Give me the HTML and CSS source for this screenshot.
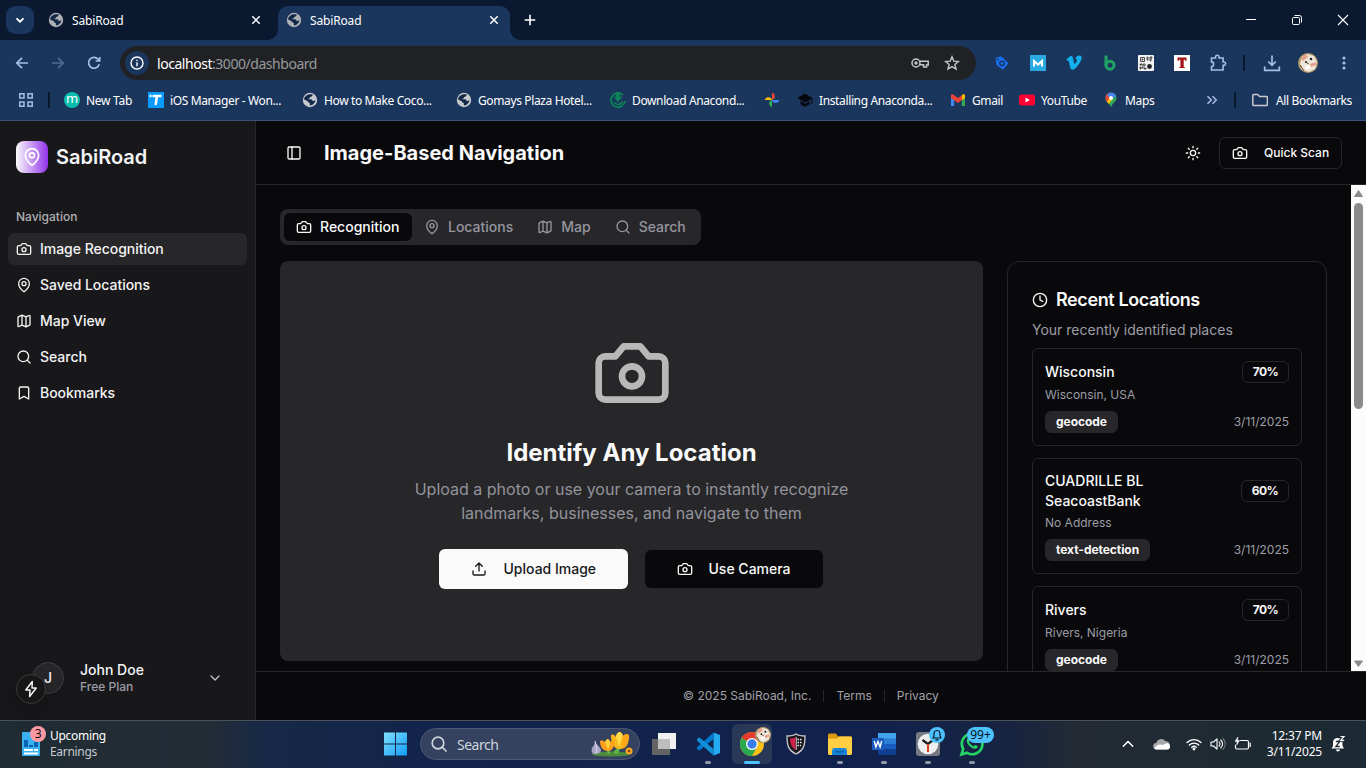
FILE: index.html
```html
<!DOCTYPE html>
<html lang="en">
<head>
<meta charset="utf-8">
<title>SabiRoad</title>
<link rel="stylesheet" href="styles.css">
</head>
<body>
<svg class="defs" width="0" height="0">
  <defs>
    <symbol id="camera" viewBox="0 0 24 24"><path d="M14.5 4h-5L7 7H4a2 2 0 0 0-2 2v9a2 2 0 0 0 2 2h16a2 2 0 0 0 2-2V9a2 2 0 0 0-2-2h-3l-2.5-3z"/><circle cx="12" cy="13" r="3"/></symbol>
    <symbol id="pin" viewBox="0 0 24 24"><path d="M20 10c0 4.993-5.539 10.193-7.399 11.799a1 1 0 0 1-1.202 0C9.539 20.193 4 14.993 4 10a8 8 0 0 1 16 0"/><circle cx="12" cy="10" r="3"/></symbol>
    <symbol id="map" viewBox="0 0 24 24"><path d="M14.106 5.553a2 2 0 0 0 1.788 0l3.659-1.83A1 1 0 0 1 21 4.619v12.764a1 1 0 0 1-.553.894l-4.553 2.277a2 2 0 0 1-1.788 0l-4.212-2.106a2 2 0 0 0-1.788 0l-3.659 1.83A1 1 0 0 1 3 19.381V6.618a1 1 0 0 1 .553-.894l4.553-2.277a2 2 0 0 1 1.788 0zM15 5.764v15M9 3.236v15"/></symbol>
    <symbol id="search" viewBox="0 0 24 24"><circle cx="11" cy="11" r="8"/><path d="m21 21-4.3-4.3"/></symbol>
    <symbol id="bookmark" viewBox="0 0 24 24"><path d="m19 21-7-4-7 4V5a2 2 0 0 1 2-2h10a2 2 0 0 1 2 2v16z"/></symbol>
    <symbol id="chevron" viewBox="0 0 24 24"><path d="m6 9 6 6 6-6"/></symbol>
    <symbol id="globe" viewBox="0 0 16 16"><circle cx="8" cy="8" r="7.2" fill="currentColor" stroke="none"/><path class="globe-land" stroke="none" d="M7.2 2.2h3.1c.5 0 .6.8.1 1.2-.6.5-.6 1.1-1.400 1.300-.8.2-1.100.5-1 1.100.1.5-.5.6-1.200.6-.5 0-.5.8 0 .8h2.200c1.100 0 1.500.8 1.500 1.600 0 .7 1.700.3 2.900-.8-.1 2.700-2.300 4.900-4.600 5.400-.9.1-1.100-.6-.9-1.200.2-.7-.1-1.100-.9-1.400-.7-.300-.8-1.300-1.400-1.600L1.900 7.300c.2-2.100 2.300-4.500 5.300-5.100z"/></symbol>
    <symbol id="face" viewBox="0 0 20 20"><circle cx="10" cy="10" r="10" fill="#b59a6c"/><path d="M4 4l5-3 7 2 3 6-2 7-6 3-7-2-2-6z" fill="#eee6d8"/><path d="M3 5l5-4 2 3-5 4zM12 11l6-2v3l-5 2z" fill="#e5a18e"/><circle cx="8" cy="9" r="1.100" fill="#211c1d"/><circle cx="13" cy="6" r="1.300" fill="#29263a"/><path d="M7 13l4-1 2 3-5 1z" fill="#fff"/><path d="M2 12l4 6M9 10l2 1" stroke="#5b4430" stroke-width="1" fill="none"/></symbol>
  </defs>
</svg>

<header class="browser">
  <div class="tabstrip">
    <div class="tab-menu"><svg class="ln" width="12" height="12" viewBox="0 0 12 12" stroke-width="1.800"><path d="M2.500 4.300 6 7.700l3.500-3.400"/></svg></div>
    <div class="tab tab-idle"><svg class="globe" width="16" height="16"><use href="#globe"/></svg><span>SabiRoad</span><svg class="ln tab-x" width="10" height="10" viewBox="0 0 10 10" stroke-width="1.500"><path d="m1.300 1.300 7.400 7.400m0-7.400-7.400 7.400"/></svg></div>
    <div class="tab tab-active"><svg class="globe" width="16" height="16"><use href="#globe"/></svg><span>SabiRoad</span><svg class="ln tab-x" width="10" height="10" viewBox="0 0 10 10" stroke-width="1.500"><path d="m1.300 1.300 7.400 7.400m0-7.400-7.400 7.400"/></svg></div>
    <svg class="ln new-tab" width="12" height="12" viewBox="0 0 12 12" stroke-width="1.600"><path d="M6 .700v10.600M.700 6h10.600"/></svg>
    <div class="win-controls">
      <svg class="ln" width="12" height="12" viewBox="0 0 12 12" stroke-width="1"><path d="M1 5.500h10"/></svg>
      <svg class="ln" width="12" height="12" viewBox="0 0 12 12" stroke-width="1"><rect x="1.500" y="3.500" width="7" height="7" rx="1"/><path d="M3.500 1.500h5a2 2 0 0 1 2 2v5"/></svg>
      <svg class="ln" width="12" height="12" viewBox="0 0 12 12" stroke-width="1.100"><path d="m1 1 10 10M11 1 1 11"/></svg>
    </div>
  </div>

  <div class="toolbar">
    <svg class="ln nav-ico" width="14" height="14" viewBox="0 0 14 14" stroke-width="1.700"><path d="M13 7H2M7 1.800 1.800 7 7 12.200"/></svg>
    <svg class="ln nav-ico faded" width="14" height="14" viewBox="0 0 14 14" stroke-width="1.700"><path d="M1 7h11M7 1.800 12.200 7 7 12.200"/></svg>
    <svg class="ln nav-ico" width="14" height="14" viewBox="0 0 14 14" stroke-width="1.700"><path d="M12.200 8.200A5.400 5.400 0 1 1 11 3.200l1.500 1.500M12.700 1v4H8.600"/></svg>
    <div class="omnibox">
      <span class="site-info"><svg class="ln" width="14" height="14" viewBox="0 0 14 14" stroke-width="1.400"><circle cx="7" cy="7" r="6"/><path d="M7 6.300v4M7 3.700v1.400"/></svg></span>
      <span class="url"><b>localhost</b>:3000/dashboard</span>
      <svg class="ln key" width="18" height="12" viewBox="0 0 18 12" stroke-width="1.500"><circle cx="5" cy="6" r="4"/><circle cx="5" cy="6" r="1"/><path d="M9 4.300h8.200v3.800h-1.600v2h-3V7.800H9"/></svg>
      <svg class="ln star" width="16" height="16" viewBox="0 0 16 16" stroke-width="1.400"><path d="m8 1.800 1.800 4.300 4.600.4-3.500 3 1.100 4.600-4-2.500-4 2.500 1.100-4.600-3.500-3 4.600-.4z"/></svg>
    </div>
    <div class="extensions">
      <svg width="16" height="16" viewBox="0 0 16 16"><path d="M1.500 3 7 1.300l7.500 7L9 14.500 2.500 10z" fill="#1a6ff0"/><circle cx="8" cy="8.300" r="2.200" fill="none" stroke="#17335d" stroke-width="1.300"/><circle cx="3.800" cy="4.500" r="1" fill="#17335d"/></svg>
      <svg width="16" height="16" viewBox="0 0 16 16"><path fill="#29abe2" d="M0 0h16v16H0z"/><path d="M4 11.500V6l4 3.600L12 6v5.500" fill="none" stroke="#fff" stroke-width="2"/></svg>
      <svg width="16" height="16" viewBox="0 0 16 16"><path fill="#12b0ec" d="M.5 4.300 4 1.300c2-.8 2.800.3 3.200 2.500.5 3 .9 5 1.500 5 .6 0 2.300-2.600 2.300-3.900 0-.9-.8-1.100-1.700-.7C10 1.300 12 .4 13.900.6c2.400.3 2.100 3 .5 6-2 3.700-5 7.700-7.300 8.200-2 .4-2.700-1.600-3.200-3.600-.5-2-.9-5.400-1.500-5.600-.3-.1-1.100.5-1.100.5z"/></svg>
      <svg width="16" height="16" viewBox="0 0 16 16"><path d="M4 .5v10" stroke="#21a366" stroke-width="3"/><circle cx="8" cy="10.200" r="4" fill="none" stroke="#21a366" stroke-width="3"/></svg>
      <svg width="16" height="16" viewBox="0 0 16 16"><rect width="16" height="16" rx="1" fill="#f3f3f3"/><path d="M2.500 2.500h4v4h-4zM4 4h1v1H4zM9 2h1v3H9zM12 2h2v1h-1v3h-1zM2 9h2v1H2zM5 9h2v2H5zM2 12h1v2H2zM4 12h1v1H4zM6 13h2v1H6z" fill="none" stroke="#222" stroke-width=".8"/><circle cx="11.500" cy="11.500" r="2.400" fill="#222"/></svg>
      <svg width="16" height="16" viewBox="0 0 16 16"><path fill="#fff" d="M0 0h16v16H0z"/><path d="M3.500 2.500h9v3.200h-1.300l-.4-.9H9.700v7.300h1.100v1H5.300v-1h1.100V4.800H5.200l-.4.9H3.500z" fill="#a31515"/></svg>
      <svg class="ln pale" width="18" height="18" viewBox="0 0 18 18" stroke-width="1.600"><path d="M2.500 4h4V3a1.800 1.800 0 0 1 3.600 0v1h4v4h.8a1.700 1.700 0 0 1 0 3.400h-.8V16H2.500v-3.500c2.800 0 2.800-4.600 0-4.600z"/></svg>
    </div>
    <i class="bar-sep"></i>
    <svg class="ln pale download" width="18" height="18" viewBox="0 0 18 18" stroke-width="1.700"><path d="M9 1.500V11M5.200 7.500 9 11.300l3.800-3.800M1.700 12.500v3.800h14.600v-3.800"/></svg>
    <svg class="profile" width="20" height="20"><use href="#face"/></svg>
    <svg class="kebab" width="4" height="16" viewBox="0 0 4 16" fill="#a8bde5"><circle cx="2" cy="3" r="1.600"/><circle cx="2" cy="8" r="1.600"/><circle cx="2" cy="13" r="1.600"/></svg>
  </div>

  <div class="bookmarks">
    <svg class="ln pale" width="16" height="16" viewBox="0 0 16 16" stroke-width="1.500"><path d="M1.800 1.800H6V6H1.800zM10 1.800h4.200V6H10zM1.800 10H6v4.200H1.800zM10 10h4.200v4.200H10z"/></svg>
    <i class="bar-sep"></i>
    <div class="bm-list">
      <div class="bm"><span class="m-logo">m</span><span>New Tab</span></div>
      <div class="bm"><svg width="16" height="16" viewBox="0 0 16 16"><path fill="#0a9bff" d="M0 0h16v16H0z"/><path d="M1.500 4h2M4.500 4h9M9 4 7.600 13" fill="none" stroke="#fff" stroke-width="2.500"/></svg><span>iOS Manager - Won...</span></div>
      <div class="bm"><svg class="globe light" width="16" height="16"><use href="#globe"/></svg><span>How to Make Coco...</span></div>
      <div class="bm"><svg class="globe light" width="16" height="16"><use href="#globe"/></svg><span>Gomays Plaza Hotel...</span></div>
      <div class="bm"><svg width="16" height="16" viewBox="0 0 16 16" fill="none" stroke="#0b8457"><path d="M13 3.200A7 7 0 1 0 15 9" stroke-width="1.800"/><path d="M12.500 9.500A4.700 4.700 0 0 1 4 10" stroke-width="1.500"/><path d="M8 0v5" stroke-width="4"/><path d="M3.500 4.500h9L8 10z" fill="#0b8457" stroke="none"/></svg><span>Download Anacond...</span></div>
      <div class="bm"><svg width="16" height="16" viewBox="0 0 16 16"><path d="M8 8V.8a3.700 3.700 0 0 1 0 7.200z" fill="#ea4335"/><path d="M8 8h7.200A3.700 3.700 0 0 1 8 8z" fill="#4285f4"/><path d="M8 8v7.200A3.700 3.700 0 0 1 8 8z" fill="#34a853"/><path d="M8 8H.8A3.700 3.700 0 0 1 8 8z" fill="#fbbc04"/></svg></div>
      <div class="bm"><svg width="16" height="16" viewBox="0 0 16 16" fill="#05080d"><path d="M8 1.500.3 6 8 10.500 14.400 7v5h1V6z"/><path d="M3.500 9 8 11.700 12.500 9v3.200L8 14.700l-4.500-2.500z"/></svg><span>Installing Anaconda...</span></div>
      <div class="bm"><svg width="16" height="16" viewBox="0 0 16 16"><path d="M1 3.500h3.200V14H1z" fill="#4285f4"/><path d="M11.800 3.500H15V14h-3.200z" fill="#34a853"/><path d="M1 3.500V6l7 5 7-5V3.500c0-1.300-1.500-1.500-2.500-.8L8 6 3.500 2.700C2.500 2 1 2.200 1 3.500z" fill="#ea4335"/><path d="m12 3 .8-.5C14 1.700 15 2.400 15 3.700V6l-3.200 2.300z" fill="#fbbc04"/></svg><span>Gmail</span></div>
      <div class="bm"><svg width="16" height="16" viewBox="0 0 16 16"><rect y="2.500" width="16" height="11" rx="2.500" fill="#ff0033"/><path d="m6.500 5.500 4.300 2.500-4.300 2.500z" fill="#fff"/></svg><span>YouTube</span></div>
      <div class="bm"><svg width="16" height="16" viewBox="0 0 16 16"><path d="M8 .5a5.500 5.500 0 0 1 5.500 5.500C13.500 10 9 11 8 15.500 7 11 2.500 10 2.500 6A5.500 5.500 0 0 1 8 .5z" fill="#34a853"/><path d="M2.500 6A5.500 5.500 0 0 1 8 .5L8 6l-3.800 4C3 8.500 2.500 7.500 2.500 6z" fill="#ea4335"/><path d="M4 2.500A5.500 5.500 0 0 1 13.200 4L8 8z" fill="#4285f4"/><path d="m3.800 9.500 4.200-5 2 2-4.200 5.500z" fill="#fbbc04"/><circle cx="8" cy="6" r="2" fill="#fff"/></svg><span>Maps</span></div>
    </div>
    <svg class="ln pale more" width="12" height="12" viewBox="0 0 12 12" stroke-width="1.500"><path d="m1.500 2.200 3.800 3.800-3.800 3.800M6.500 2.200 10.300 6 6.500 9.800"/></svg>
    <i class="bar-sep"></i>
    <div class="bm all"><svg class="ln folder" width="16" height="16" viewBox="0 0 16 16" stroke-width="1.500"><path d="M.8 3.300c0-.6.300-.8.800-.8h4l2 2h7c.5 0 .8.300.8.800v7.400c0 .5-.300.8-.8.8h-13c-.5 0-.8-.300-.8-.8z"/></svg><span>All Bookmarks</span></div>
  </div>
</header>

<div class="app">
  <aside class="sidebar">
    <div class="brand"><span class="brand-mark"><svg class="ln" width="20" height="20"><use href="#pin"/></svg></span><span>SabiRoad</span></div>
    <div class="nav-label">Navigation</div>
    <nav class="nav">
      <a class="nav-item current"><svg class="ln" width="16" height="16"><use href="#camera"/></svg><span>Image Recognition</span></a>
      <a class="nav-item"><svg class="ln" width="16" height="16"><use href="#pin"/></svg><span>Saved Locations</span></a>
      <a class="nav-item"><svg class="ln" width="16" height="16"><use href="#map"/></svg><span>Map View</span></a>
      <a class="nav-item"><svg class="ln" width="16" height="16"><use href="#search"/></svg><span>Search</span></a>
      <a class="nav-item"><svg class="ln" width="16" height="16"><use href="#bookmark"/></svg><span>Bookmarks</span></a>
    </nav>
    <div class="user">
      <span class="avatar">J<span class="dev-badge"><svg class="ln" width="18" height="18" viewBox="0 0 18 18"><path d="M10.300 1.500 3.800 10H8l-.4 6.500L14.200 8H10z"/></svg></span></span>
      <div class="user-text"><div class="user-name">John Doe</div><div class="user-plan">Free Plan</div></div>
      <svg class="ln user-chev" width="16" height="16"><use href="#chevron"/></svg>
    </div>
  </aside>

  <main class="main">
    <div class="topbar">
      <svg class="ln" width="16" height="16" viewBox="0 0 24 24"><rect x="3" y="3" width="18" height="18" rx="2"/><path d="M9 3v18"/></svg>
      <h1>Image-Based Navigation</h1>
      <svg class="ln" width="16" height="16" viewBox="0 0 24 24"><circle cx="12" cy="12" r="4"/><path d="M12 2v2M12 20v2M4.930 4.930l1.410 1.410M17.660 17.660l1.410 1.410M2 12h2M20 12h2M6.340 17.660l-1.410 1.410M19.070 4.930l-1.410 1.410"/></svg>
      <button class="quick"><svg class="ln" width="16" height="16"><use href="#camera"/></svg>Quick Scan</button>
    </div>

    <div class="scroller">
      <div class="content">
        <div class="tabs">
          <span class="pill on"><svg class="ln" width="16" height="16"><use href="#camera"/></svg><span>Recognition</span></span>
          <span class="pill"><svg class="ln" width="16" height="16"><use href="#pin"/></svg><span>Locations</span></span>
          <span class="pill"><svg class="ln" width="16" height="16"><use href="#map"/></svg><span>Map</span></span>
          <span class="pill"><svg class="ln" width="16" height="16"><use href="#search"/></svg><span>Search</span></span>
        </div>
        <div class="columns">
          <section class="hero">
            <svg class="ln hero-icon" width="80" height="80"><use href="#camera"/></svg>
            <h2>Identify Any Location</h2>
            <p>Upload a photo or use your camera to instantly recognize<br>landmarks, businesses, and navigate to them</p>
            <div class="actions">
              <button class="btn-light"><svg class="ln" width="16" height="16" viewBox="0 0 24 24"><path d="M21 15v4a2 2 0 0 1-2 2H5a2 2 0 0 1-2-2v-4M17 8l-5-5-5 5M12 3v12"/></svg><span>Upload Image</span></button>
              <button class="btn-dark"><svg class="ln" width="16" height="16"><use href="#camera"/></svg><span>Use Camera</span></button>
            </div>
          </section>
          <section class="card">
            <h3><svg class="ln" width="16" height="16" viewBox="0 0 24 24"><circle cx="12" cy="12" r="10"/><path d="M12 6v6l4 2"/></svg>Recent Locations</h3>
            <p class="sub">Your recently identified places</p>
            <div class="list">
              <article class="place"><div class="row"><strong>Wisconsin</strong><span class="score">70%</span></div><div class="addr">Wisconsin, USA</div><div class="row foot"><span class="tag">geocode</span><time>3/11/2025</time></div></article>
              <article class="place"><div class="row"><strong>CUADRILLE BL SeacoastBank</strong><span class="score wide">60%</span></div><div class="addr">No Address</div><div class="row foot"><span class="tag">text-detection</span><time>3/11/2025</time></div></article>
              <article class="place"><div class="row"><strong>Rivers</strong><span class="score">70%</span></div><div class="addr">Rivers, Nigeria</div><div class="row foot"><span class="tag">geocode</span><time>3/11/2025</time></div></article>
            </div>
          </section>
        </div>
      </div>
      <div class="scrollbar">
        <svg width="15" height="18" viewBox="0 0 15 18"><path d="M7.500 5.500 11.500 11.500h-8z" fill="#8b8b8b" stroke="#8b8b8b" stroke-linejoin="round"/></svg>
        <i class="thumb"></i>
        <svg class="down" width="15" height="15" viewBox="0 0 15 15"><path d="M3.500 5h8l-4 5.500z" fill="#8b8b8b" stroke="#8b8b8b" stroke-linejoin="round"/></svg>
      </div>
    </div>
    <footer class="footer"><span>© 2025 SabiRoad, Inc.</span><i></i><span>Terms</span><i></i><span>Privacy</span></footer>
  </main>
</div>

<div class="taskbar">
  <div class="widget">
    <span class="news"><svg width="20" height="26" viewBox="0 0 20 26"><rect x="1" y="1" width="18" height="24" rx="1" fill="#39b0f0"/><path d="M3 9h4v7H3zM8 14h4v2H8zM13 11h4v5h-4z" fill="#0b63b5"/><path d="M3 18h9v2H3zM13 18h4v2h-4zM3 21.500h14v2H3z" fill="#fff"/></svg><b>3</b></span>
    <div><div class="w-title">Upcoming</div><div class="w-sub">Earnings</div></div>
  </div>
  <div class="dock">
    <div class="cell"><svg width="24" height="24" viewBox="0 0 24 24"><defs><linearGradient id="win" x1="0" y1="0" x2="1" y2="1"><stop offset="0" stop-color="#7fe0ff"/><stop offset="1" stop-color="#129bf5"/></linearGradient></defs><path d="M1 .5h11v11H1zM13 .500h11v11H13zM1 12.500h11v11H1zM13 12.500h11v11H13z" fill="url(#win)"/></svg></div>
    <div class="tb-search"><svg class="ln" width="16" height="16" viewBox="0 0 16 16" stroke-width="1.700"><circle cx="7" cy="7" r="5.800"/><path d="m11.200 11.200 3.800 3.800"/></svg><span>Search</span>
      <svg class="flowers" width="44" height="26" viewBox="0 0 44 26"><ellipse cx="21" cy="23" rx="19" ry="2.500" fill="#4c8b3c"/><path d="m17 14 2 9M30 13l-3 10M24 22l6-6" stroke="#61b548" stroke-width="2.500" fill="none"/><path d="M21 4c2-1 4 0 5 2 0-3 2-5 4-5 2 1 3 2 3 4 2-2 4-2 6-1 0 8-2 14-9 14s-9-6-9-14z" fill="#f9b517"/><path d="M26 6c0-3 2-5 4-5 2 1 3 3 2 6l-3 9z" fill="#ffdb48"/><path d="M33 5c2-2 4-2 6-1 0 6-2 10-6 13z" fill="#ffa51b"/><path d="M10 10c2-1 4 0 5 1 1-2 2-3 3-3 1 1 2 2 2 3 1-1 3-2 4-1 0 7-2 10-6 10-5 0-8-4-8-10z" fill="#ff9f1c"/><path d="M15 11c1-2 2-3 3-3 2 1 2 3 2 5l-2 6z" fill="#ffd23c"/><path d="M5 10c1 4 6 6 6 9s-3 4-6 4-4-3-3-6c1-2 3-3 3-7z" fill="#aaa4c8"/><path d="M5 10c1 5 3 8 1 12" stroke="#e7e3f3" fill="none"/><circle cx="39" cy="20" r="3.500" fill="#f4a623"/><circle cx="39" cy="20" r="1.300" fill="#8d4a0b"/></svg>
    </div>
    <div class="cell"><svg width="24" height="22" viewBox="0 0 24 22"><path d="M6 0h18v16H6z" fill="#f1f1f1"/><path d="M0 6h18v16H0z" fill="#636363"/><path d="M6 6h12v10H6z" fill="#bdbdbd"/></svg></div>
    <div class="cell run"><svg width="24" height="24" viewBox="0 0 24 24"><path d="M17.500.500 24 3v18l-6.500 2.500z" fill="#25a9f2"/><path d="M17.500.500V7L3.500 18.500 1 17.300v-2z" fill="#007acc"/><path d="M17.500 23.500V17L3.500 5.500 1 6.700v2z" fill="#138fd8"/></svg></div>
    <div class="cell run focus"><svg width="26" height="26" viewBox="0 0 26 26"><circle cx="13" cy="13" r="12" fill="#fbc116"/><path d="M13 13 2.600 7A12 12 0 0 1 23.400 7z" fill="#e33b2e"/><path d="m13 13-10.400-6A12 12 0 0 0 13 25l5-9z" fill="#2ca84e"/><circle cx="13" cy="13" r="6" fill="#fff"/><circle cx="13" cy="13" r="4.700" fill="#3c7ee8"/></svg><svg class="mini" width="16" height="16" viewBox="0 0 20 20"><use href="#face"/></svg></div>
    <div class="cell"><svg width="20" height="22" viewBox="0 0 20 22"><path d="M10 1c3 2 6 2 9 2 0 9-1 14-9 18C2 17 1 12 1 3c3 0 6 0 9-2z" fill="#17171d" stroke="#c9c9cb" stroke-width="1.300"/><path d="M9.500 4v13C5 14 4 10 4 5.500c2 0 4-.5 5.500-1.500z" fill="#cf214b"/><path d="M11.500 6.500H16M11.500 9.500H16M11.500 12.500h3.500" stroke="#eee" stroke-width="1.600" stroke-dasharray="1.500 1"/><path d="M10.300 4v13" stroke="#eee" stroke-width=".8"/></svg></div>
    <div class="cell run"><svg width="26" height="24" viewBox="0 0 26 24"><path d="M1 3.500C1 2 1.500 1.500 3 1.500h6l2 3h12c1.500 0 2 .5 2 2V9H1z" fill="#d99a0e"/><path d="M1 6.500h9l2-2h11.500c1 0 1.500.5 1.500 1.500v15c0 1.500-.5 2-2 2H3c-1.500 0-2-.5-2-2z" fill="#ffce43"/><path d="M5 23v-3.500C5 17 6 16 8 16h9c2 0 3 1 3 3.500V23z" fill="#1784d8"/><path d="M8 19h9v1.500H8z" fill="#0d5ea7"/></svg></div>
    <div class="cell run"><svg width="26" height="24" viewBox="0 0 26 24"><path d="M7 1h18v6H7z" fill="#41a5ee"/><path d="M7 6.500h18V12H7z" fill="#2b7cd3"/><path d="M7 12h18v5.500H7z" fill="#185abd"/><path d="M7 17.500h18V23H7z" fill="#103f91"/><path d="M1 6h12v12H1z" fill="#185abd"/><path d="m3.300 9 1.600 6L7 9.500 9.100 15l1.600-6" fill="none" stroke="#fff" stroke-width="1.400"/></svg></div>
    <div class="cell run"><svg width="26" height="26" viewBox="0 0 26 26"><rect x="1" y="1" width="24" height="24" rx="3" fill="#737a82"/><circle cx="13" cy="13" r="10.300" fill="#eee"/><path d="M13 13 7.500 9M13 13l5-4" stroke="#222" stroke-width="2.300"/><path d="M13 13v8" stroke="#d5411e" stroke-width="2"/></svg><span class="bell"><svg class="ln" width="10" height="12" viewBox="0 0 10 12" stroke-width="1.200"><path d="M1 9h8L8 7V4.500a3 3 0 0 0-6 0V7zM3.800 10.800h2.400"/></svg></span></div>
    <div class="cell run"><svg width="26" height="26" viewBox="0 0 26 26"><path d="m2.500 23.500 1.700-5.500A10.300 10.300 0 1 1 8 21.800z" fill="none" stroke="#25d366" stroke-width="2.700"/><path d="M8 8c1-2 2-1 2.800.8.300.8-1 1.700-.7 2.200 1 2.100 2.300 3.200 4.400 4.200.7.200 1.300-1.500 2-1.200 3 1.300 2.300 1.900 1.700 2.900C15 20 6 13.500 8 8z" fill="#25d366"/></svg><span class="count">99+</span></div>
  </div>
  <div class="tray">
    <svg class="ln t-up" width="12" height="12" viewBox="0 0 12 12" stroke-width="1.500"><path d="m1.300 8.300 4.700-4.800 4.700 4.800"/></svg>
    <svg class="t-cloud" width="18" height="12" viewBox="0 0 18 12"><path d="M3.500 11.500a3.200 3.200 0 0 1-.3-6.400A5.200 5.200 0 0 1 12.500 3.300 4.200 4.200 0 0 1 14 11.500z" fill="#a7a9ab"/><path d="M1.500 10.500C3 7 7 5.500 9.500 7L13 5.500c3-.8 4.500 2 4 4-.4 1.500-1.500 2-3 2H4c-1 0-2-.3-2.500-1z" fill="#fff"/></svg>
    <svg class="ln t-wifi" width="16" height="14" viewBox="0 0 16 14" stroke-width="1.300"><path d="M1 5.500a10 10 0 0 1 14 0M3.300 8a6.700 6.700 0 0 1 9.400 0M5.600 10.400a3.400 3.400 0 0 1 4.800 0"/><circle cx="8" cy="12" r=".8" fill="#fff"/></svg>
    <svg class="ln t-vol" width="16" height="14" viewBox="0 0 16 14" stroke-width="1.100"><path d="M1 5h2.500L7 1.800v10.400L3.500 9H1zM9 4.800a3 3 0 0 1 0 4.400M10.800 3a5.500 5.500 0 0 1 0 8"/><path d="M13 1.500a8 8 0 0 1 0 11" opacity=".35"/></svg>
    <svg class="ln t-bat" width="17" height="14" viewBox="0 0 17 14" stroke-width="1.200"><path d="M6.500 3.500H13a1.500 1.500 0 0 1 1.500 1.500v5.500A1.500 1.500 0 0 1 13 12H3a1.500 1.500 0 0 1-1.500-1.500V8M16.200 6v3.500"/><path d="M3.800 0 1 4.500h2.200L2.700 8 5.500 3.500H3.600z" fill="#fff" stroke-width=".5"/></svg>
    <div class="clock"><div>12:37 PM</div><div>3/11/2025</div></div>
    <svg class="t-bell" width="16" height="18" viewBox="0 0 16 18"><path d="M1.500 13.500 3 11V7a4.800 4.800 0 0 1 9.500 0v4l1.500 2.500zM6 14.500h4a2 2 0 0 1-4 0z" fill="#fff"/><path d="M5.800 6.500h4l-4 5h4" fill="none" stroke="#202a31" stroke-width="1.300"/><path d="M10.500 1.500H14l-3.300 3.800h3.500" fill="none" stroke="#202a31" stroke-width="3"/><path d="M10.500 1.500H14l-3.300 3.800h3.500" fill="none" stroke="#fff" stroke-width="1.200"/></svg>
  </div>
</div>
</body>
</html>
```

FILE: styles.css
```css
* { box-sizing: border-box; }
html, body { margin: 0; height: 768px; overflow: hidden; }
body { width: 1366px; background: #09090b; color: #fafafa; font-family: Inter, "Liberation Sans", sans-serif; display: flex; flex-direction: column; }
.defs { position: absolute; }
svg { flex: none; display: block; }
.ln { fill: none; stroke: currentColor; stroke-linecap: round; stroke-linejoin: round; }
.app .ln { stroke-width: 2; }
.app .dev-badge .ln { stroke-width: 1.5; }
button { font: inherit; color: inherit; border: 0; background: none; padding: 0; display: flex; align-items: center; }
h1, h2, h3, p { margin: 0; }

/* browser window */
.browser { font-family: "Noto Sans", "Open Sans", sans-serif; font-size: 12px; color: #fff; background: #1b365d; height: 121px; border-bottom: 1px solid #39547c; flex: none; }
.browser .ln { stroke-linecap: butt; stroke-linejoin: miter; }
.tabstrip { height: 40px; background: #0a1930; display: flex; align-items: center; padding-left: 6px; }
.tab-menu { width: 28px; height: 28px; border-radius: 9px; background: #1b365d; display: grid; place-items: center; }
.tab { display: flex; align-items: center; gap: 8px; height: 34px; letter-spacing: -0.150px; }
.tab-idle { width: 234px; margin-left: 4px; padding: 0 11px 0 10px; }
.tab-active { width: 232px; margin-left: 6px; padding: 0 11px 6px 8px; background: #1b365d; border-radius: 10px 10px 0 0; align-self: flex-end; position: relative; }
.tab-active::before, .tab-active::after { content: ""; position: absolute; bottom: 0; width: 10px; height: 10px; }
.tab-active::before { left: -10px; background: radial-gradient(circle at 0 0, transparent 9.500px, #1b365d 10px); }
.tab-active::after { right: -10px; background: radial-gradient(circle at 100% 0, transparent 9.500px, #1b365d 10px); }
.tab-x { margin-left: auto; }
.globe { color: #aeb1b5; }
.globe-land { fill: #14294a; }
.globe.light { color: #c6c9ce; }
.new-tab { margin-left: 14px; }
.win-controls { margin-left: auto; display: flex; gap: 34px; padding-right: 17px; }
.toolbar { height: 46px; display: flex; align-items: center; padding-left: 15px; color: #c9d6ee; }
.nav-ico { color: #a8bde5; margin-right: 22px; }
.nav-ico.faded { color: #506b98; }
.omnibox { width: 856px; height: 34px; border-radius: 17px; background: #202124; margin-left: -3px; padding: 0 16px 0 5px; display: flex; align-items: center; }
.site-info { width: 24px; height: 24px; border-radius: 50%; background: #1b365d; color: #fff; display: grid; place-items: center; }
.url { font-size: 14px; color: #97999d; margin-left: 8px; letter-spacing: -0.460px; flex: 1; }
.url b { font-weight: 400; color: #fff; }
.key, .star { color: #c4c7cb; }
.star { margin-left: 15px; }
.extensions { display: flex; gap: 20px; margin-left: 18px; align-items: center; }
.extensions svg:last-child { margin-left: -1px; }
.pale { color: #a8bde5; }
.bar-sep { width: 2px; height: 16px; background: #0a1930; flex: none; }
.toolbar .bar-sep { margin-left: 16px; }
.download { margin-left: 18px; }
.profile { margin-left: 17px; }
.kebab { margin-left: 24px; }
.bookmarks { height: 28px; display: flex; align-items: center; padding-left: 18px; }
.bookmarks > .bar-sep { margin: 0 14px; }
.bm-list { display: grid; grid-template-columns: 84px 154px 154px 154px 154px 33px 153px 69px 84px 88px; }
.bm { display: flex; align-items: center; gap: 6px; white-space: nowrap; letter-spacing: -0.370px; }
.bm:first-child { letter-spacing: -0.280px; }
.m-logo { width: 16px; height: 16px; border-radius: 50%; background: #0bbdab; font-size: 13px; line-height: 13px; text-align: center; }
.more { margin-left: 15px; }
.bookmarks > .more + .bar-sep { margin: 0 16px; }
.all { gap: 8px; }
.folder { color: #c7c9cc; }

/* application */
.app { flex: 1; display: flex; min-height: 0; }
.sidebar { width: 256px; background: #18181b; border-right: 1px solid #27272a; padding: 20px 8px 0; display: flex; flex-direction: column; color: #f4f4f5; }
.brand { display: flex; align-items: center; gap: 8px; padding-left: 8px; font-size: 20px; font-weight: 600; height: 32px; }
.brand-mark { width: 32px; height: 32px; border-radius: 8px; background: linear-gradient(90deg, #fafafa, #9333ea); display: grid; place-items: center; color: #fff; }
.nav-label { font-size: 12px; font-weight: 500; color: #b0b0b3; padding-left: 8px; height: 32px; line-height: 32px; margin-top: 28px; }
.nav { display: grid; gap: 4px; }
.nav-item { height: 32px; display: flex; align-items: center; gap: 8px; padding: 0 8px; border-radius: 6px; font-size: 14px; font-weight: 500; letter-spacing: -0.030px; }
.nav-item span, .pill span, .actions span { padding-bottom: 2px; }
.nav-item.current { background: #27272a; }
.user { margin-top: auto; height: 85px; display: flex; padding: 27px 24px 0; }
.avatar { position: relative; width: 32px; height: 32px; border-radius: 50%; background: #27272a; border: 1px solid #3f3f43; font-size: 14px; font-weight: 500; line-height: 30px; text-align: center; }
.dev-badge { position: absolute; left: -17px; top: 11px; width: 30px; height: 30px; border-radius: 50%; background: #171717; border: 1px solid #3b3b3d; display: grid; place-items: center; box-shadow: 0 8px 20px rgba(0, 0, 0, .25); }
.user-text { margin-left: 16px; font-size: 14px; line-height: 16px; font-weight: 500; }
.user-plan { font-size: 12px; line-height: 18px; color: #9d9da6; }
.user-chev { margin: 8px 0 0 auto; color: #c0c0c5; }
.main { flex: 1; display: flex; flex-direction: column; min-width: 0; }
.topbar { height: 64px; border-bottom: 1px solid #27272a; display: flex; align-items: center; padding: 0 24px 0 30px; flex: none; }
.topbar h1 { font-size: 20px; font-weight: 700; margin: 0 auto 0 22px; }
.quick { border: 1px solid #27272a; border-radius: 6px; height: 32px; width: 123px; margin-left: 18px; padding-left: 12px; gap: 16px; font-size: 12px; font-weight: 550; white-space: nowrap; }
.scroller { flex: 1; display: flex; min-height: 0; overflow: hidden; }
.content { flex: 1; padding: 24px 24px 0; overflow: hidden; min-width: 0; }
.tabs { display: inline-flex; height: 36px; padding: 4px; border-radius: 8px; background: #27272a; vertical-align: top; width: 421px; }
.pill { display: flex; align-items: center; gap: 8px; padding: 0 12px; font-size: 14px; font-weight: 500; color: #96969f; border-radius: 6px; flex: none; }
.pill.on { background: #09090b; color: #fafafa; width: 128px; }
.columns { margin-top: 16px; display: grid; grid-template-columns: 703px 320px; gap: 24px; align-items: start; }
.hero { height: 400px; background: #27272a; border-radius: 8px; display: flex; flex-direction: column; align-items: center; padding-top: 72px; }
.hero-icon { color: #b8b8b9; }
.hero h2 { font-size: 24px; font-weight: 700; line-height: 32px; margin-top: 24px; }
.hero p { font-size: 16px; line-height: 24px; color: #93939b; text-align: center; margin-top: 8px; }
.actions { display: flex; align-items: center; gap: 17px; margin-top: 24px; padding-right: 2px; font-size: 14px; font-weight: 500; }
.actions button { gap: 16px; padding-left: 32px; border-radius: 6px; white-space: nowrap; }
.actions .btn-light { width: 189px; height: 40px; gap: 17px; background: #fafafa; color: #18181b; }
.btn-dark { width: 178px; height: 38px; background: #09090b; }
.card { border: 1px solid #27272a; border-radius: 12px; padding: 24px; height: 700px; }
.card h3 { display: flex; align-items: center; gap: 8px; font-size: 18px; font-weight: 600; line-height: 28px; letter-spacing: -0.400px; }
.sub { font-size: 14px; line-height: 20px; margin-top: 6px; color: #9d9da6; }
.list { display: grid; gap: 12px; margin-top: 8px; }
.place { border: 1px solid #27272a; border-radius: 6px; padding: 12px; }
.row { display: flex; justify-content: space-between; align-items: center; }
.row strong { font-size: 14px; line-height: 20px; font-weight: 500; max-width: 130px; }
.score, .tag { height: 22px; border-radius: 6px; font-size: 12px; line-height: 20px; font-weight: 700; border: 1px solid #27272a; }
.score { width: 47px; text-align: center; letter-spacing: -0.500px; }
.score.wide { width: 48px; }
.tag { background: #27272a; padding: 0 10px; letter-spacing: -0.050px; }
.addr { font-size: 12px; line-height: 16px; margin-top: 4px; color: #9d9da6; }
.foot { margin-top: 8px; }
.place time { font-size: 12px; color: #9d9da6; padding-bottom: 2px; }
.scrollbar { width: 15px; background: #fcfcfc; display: flex; flex-direction: column; align-items: center; }
.thumb { width: 9px; height: 206px; border-radius: 5px; background: #8b8b8b; }
.down { margin-top: auto; }
.footer { height: 49px; border-top: 1px solid #27272a; display: flex; justify-content: center; align-items: center; gap: 12px; font-size: 12px; color: #a1a1aa; flex: none; }
.footer span { padding-bottom: 2px; }
.footer i { width: 1px; height: 12px; background: #27272a; }

/* desktop taskbar */
.taskbar { height: 48px; flex: none; border-top: 1px solid #4b5258; background: linear-gradient(90deg, #1f2c34 0, #242c36 210px, #172946 260px, #12244a 420px, #11214e 850px, #172441 1010px, #232a33 1080px, #1f2a32 1200px, #1b2a33); display: flex; align-items: center; font-family: "Noto Sans", "Open Sans", sans-serif; font-size: 12px; color: #fff; }
.widget { width: 373px; padding: 0 0 2px 21px; display: flex; gap: 9px; line-height: 16px; letter-spacing: -0.300px; }
.news { position: relative; margin-top: 3px; }
.news b { position: absolute; left: 9px; top: -5px; width: 16px; height: 16px; border-radius: 50%; background: #ff99a4; color: #111; font-weight: 400; font-size: 12px; line-height: 16px; text-align: center; }
.w-sub { color: #c7cbcf; }
.dock { display: flex; align-items: center; margin-bottom: 1px; }
.cell { width: 44px; height: 40px; display: grid; place-items: center; position: relative; }
.run::after { content: ""; position: absolute; bottom: 0; left: 19px; width: 6px; height: 3px; border-radius: 2px; background: #9299a6; }
.focus { background: #2a3857; background-clip: padding-box; border: solid transparent; border-width: 0 2px; border-radius: 7px; }
.focus::after { left: 12px; width: 16px; background: #4cc2ff; }
.mini { position: absolute; right: 1px; top: 3px; }
.tb-search { width: 220px; height: 32px; border-radius: 16px; margin: 0 2px 0 3px; background: #34425f; border: 1px solid #4c5976; display: flex; align-items: center; padding: 0 5px 0 10px; font-size: 14px; color: #cfd4df; }
.tb-search span { margin-left: 10px; flex: 1; letter-spacing: -0.500px; }
.bell { position: absolute; right: 5px; top: 3px; width: 16px; height: 16px; border-radius: 50%; background: #4cc2ff; color: #081523; display: grid; place-items: center; }
.count { position: absolute; left: 17px; top: 3px; height: 16px; width: 27px; border-radius: 8px; background: #4cc2ff; color: #08131e; line-height: 16px; text-align: center; }
.tray { margin-left: auto; display: flex; align-items: center; padding: 0 20px 2px 0; }
.t-cloud { margin-left: 19px; }
.t-wifi { margin-left: 15px; }
.t-vol { margin-left: 8px; }
.t-bat { margin-left: 8px; }
.clock { width: 71px; text-align: right; line-height: 16px; letter-spacing: -0.200px; }
.t-bell { margin-left: 8px; }
```
